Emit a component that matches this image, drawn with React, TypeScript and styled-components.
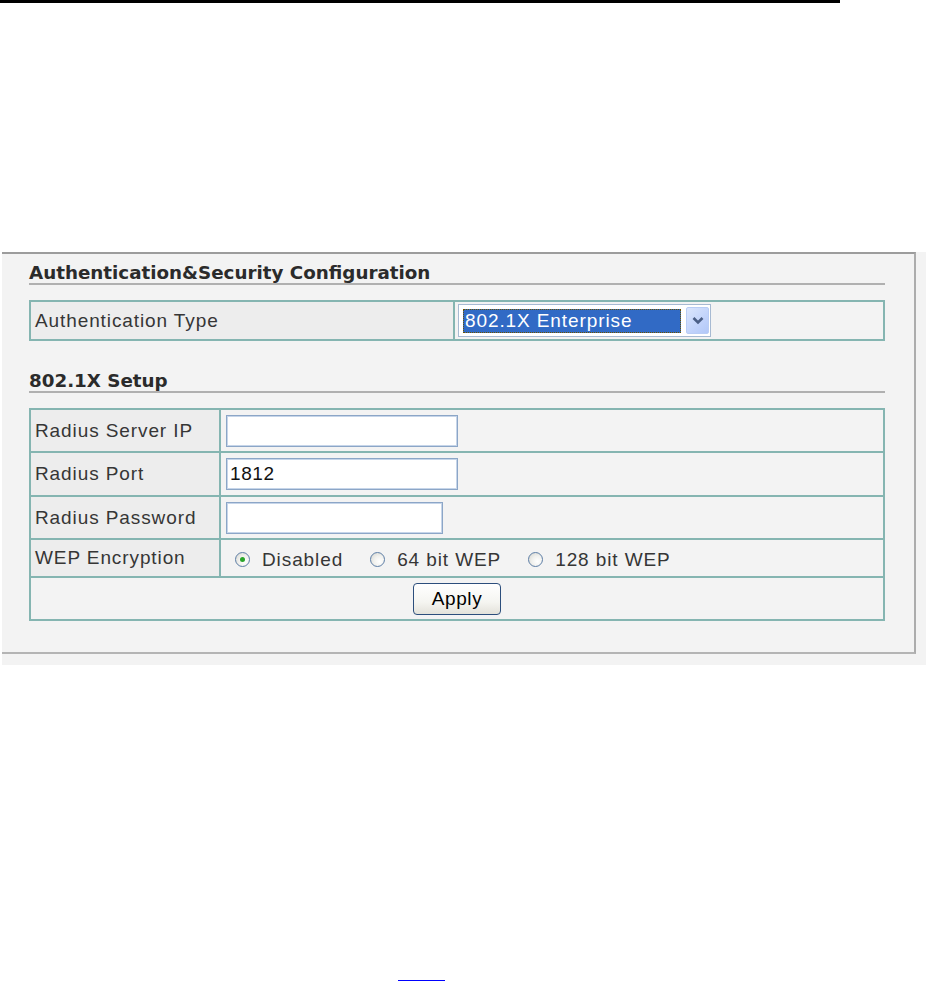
import React from 'react';
import styled, { createGlobalStyle } from 'styled-components';

const radiusFields = [
	{ label: 'Radius Server IP', value: '', width: 232, height: 43 },
	{ label: 'Radius Port', value: '1812', width: 232, height: 44 },
	{ label: 'Radius Password', value: '', width: 217, height: 43, type: 'password' },
];

const wepOptions = ['Disabled', '64 bit WEP', '128 bit WEP'];

export default function App() {
	return (
		<>
			<GlobalStyle />
			<TopRule />
			<Shot>
				<Frame>
					<SectionTitle $gap={8}>Authentication&amp;Security Configuration</SectionTitle>
					<FormGrid $cols='424px 1fr'>
						<LabelCell $h={39}>Authentication Type</LabelCell>
						<FieldCell $h={39} $pad={3}>
							<SelectBox>
								<Selected>802.1X Enterprise</Selected>
								<DropButton>
									<svg width='12' height='9' viewBox='0 0 12 9'>
										<path d='M1.5 2 L6 6.5 L10.5 2' fill='none' stroke='#4b5f86' strokeWidth='2.6' />
									</svg>
								</DropButton>
							</SelectBox>
						</FieldCell>
					</FormGrid>

					<SectionTitle $gap={29}>802.1X Setup</SectionTitle>
					<FormGrid $cols='190px 1fr'>
						{radiusFields.map((f) => (
							<React.Fragment key={f.label}>
								<LabelCell $h={f.height}>{f.label}</LabelCell>
								<FieldCell $h={f.height} $pad={5}>
									<TextInput $w={f.width} type={f.type || 'text'} defaultValue={f.value} />
								</FieldCell>
							</React.Fragment>
						))}
						<LabelCell $h={38}>WEP Encryption</LabelCell>
						<FieldCell $h={38} $pad={14}>
							<RadioGroup>
								{wepOptions.map((opt, i) => (
									<RadioOption key={opt}>
										<Radio $checked={i === 0} />
										{opt}
									</RadioOption>
								))}
							</RadioGroup>
						</FieldCell>
						<ActionCell>
							<ApplyButton>Apply</ApplyButton>
						</ActionCell>
					</FormGrid>
				</Frame>
			</Shot>
			<Footer>
				<FootLink href='#'>&nbsp;</FootLink>
			</Footer>
		</>
	);
}

const GlobalStyle = createGlobalStyle`
	body {
		margin: 0;
		background: #fff;
		font-family: 'Liberation Sans', Arial, sans-serif;
	}
`;

const TopRule = styled.div`
	width: 840px;
	height: 3px;
	background: #000;
`;

const Shot = styled.div`
	margin: 249px 0 0 2px;
	width: 924px;
	padding-bottom: 11px;
	background: #f3f3f3;
`;

const Frame = styled.div`
	box-sizing: border-box;
	width: 914px;
	padding: 0 0 31px 27px;
	border-top: 2px solid #9c9c9c;
	border-right: 2px solid #acacac;
	border-bottom: 2px solid #b4b4b4;
`;

const SectionTitle = styled.h3<{ $gap: number }>`
	width: 856px;
	margin: ${(p) => p.$gap}px 0 15px;
	height: 21px;
	line-height: 21px;
	border-bottom: 2px solid #b0b0b0;
	font-family: 'DejaVu Sans', Verdana, sans-serif;
	font-size: 18.3px;
	font-weight: bold;
	color: #2b2b2b;
	white-space: nowrap;
`;

const FormGrid = styled.div<{ $cols: string }>`
	display: grid;
	grid-template-columns: ${(p) => p.$cols};
	width: 856px;
	box-sizing: border-box;
	border-top: 2px solid #85b5b1;
	border-left: 2px solid #85b5b1;
`;

const Cell = styled.div<{ $h: number }>`
	box-sizing: border-box;
	height: ${(p) => p.$h}px;
	display: flex;
	align-items: center;
	border-right: 2px solid #85b5b1;
	border-bottom: 2px solid #85b5b1;
	font-size: 19px;
	letter-spacing: 0.9px;
	color: #363636;
`;

const LabelCell = styled(Cell)`
	padding-left: 4px;
	background: #ededed;
	white-space: nowrap;
`;

const FieldCell = styled(Cell)<{ $pad: number }>`
	padding-left: ${(p) => p.$pad}px;
	background: #f3f3f3;
`;

const ActionCell = styled.div`
	grid-column: 1 / -1;
	box-sizing: border-box;
	height: 43px;
	display: flex;
	align-items: center;
	justify-content: center;
	border-right: 2px solid #85b5b1;
	border-bottom: 2px solid #85b5b1;
	background: #f3f3f3;
`;

const SelectBox = styled.div`
	box-sizing: border-box;
	width: 253px;
	height: 33px;
	display: flex;
	align-items: center;
	gap: 5px;
	padding: 0 1px 0 4px;
	border: 1px solid #a7bad2;
	background: #fff;
`;

const Selected = styled.div`
	flex: 1;
	box-sizing: border-box;
	height: 24px;
	line-height: 22px;
	padding-left: 1px;
	border: 1px dotted #6b5200;
	background: #316ac5;
	color: #fff;
	font-size: 19px;
	white-space: nowrap;
	overflow: hidden;
`;

const DropButton = styled.div`
	box-sizing: border-box;
	width: 23px;
	height: 27px;
	display: flex;
	align-items: center;
	justify-content: center;
	border: 1px solid #b9cdf5;
	border-radius: 2px;
	background: linear-gradient(135deg, #dbe6fd 0%, #c1d3fb 60%, #b2c8f8 100%);
`;

const TextInput = styled.input<{ $w: number }>`
	box-sizing: border-box;
	width: ${(p) => p.$w}px;
	height: 32px;
	padding: 0 3px;
	border: 1px solid #8ca6c7;
	box-shadow: inset 0 0 0 1px #c6d5e9;
	background: #fff;
	font-family: 'Liberation Sans', Arial, sans-serif;
	font-size: 19px;
	letter-spacing: 0.6px;
	color: #111;
	outline: none;
`;

const RadioGroup = styled.div`
	display: flex;
	align-items: center;
	gap: 27px;
	padding-top: 3px;
`;

const RadioOption = styled.label`
	display: inline-flex;
	align-items: center;
	gap: 12px;
	white-space: nowrap;
`;

const Radio = styled.span<{ $checked?: boolean }>`
	position: relative;
	box-sizing: border-box;
	width: 15px;
	height: 15px;
	border-radius: 50%;
	border: 1px solid #5d7ea6;
	background: radial-gradient(circle at 65% 65%, #ffffff 0%, #f1f1ee 45%, #d3d3cc 100%);
	&::after {
		content: '';
		display: ${(p) => (p.$checked ? 'block' : 'none')};
		position: absolute;
		left: 4px;
		top: 4px;
		width: 5px;
		height: 5px;
		border-radius: 50%;
		background: #2aa52a;
	}
`;

const ApplyButton = styled.button`
	box-sizing: border-box;
	width: 88px;
	height: 32px;
	border: 1px solid #2c4e7c;
	border-radius: 4px;
	background: linear-gradient(180deg, #ffffff 0%, #f5f5f1 60%, #e3e2da 100%);
	font-family: 'Liberation Sans', Arial, sans-serif;
	font-size: 19px;
	letter-spacing: 0.6px;
	color: #000;
	padding: 0;
`;

const Footer = styled.div`
	margin-top: 303px;
	padding-left: 398px;
`;

const FootLink = styled.a`
	display: block;
	width: 47px;
	height: 12px;
	border-bottom: 1px solid #0000ff;
	text-decoration: none;
`;
